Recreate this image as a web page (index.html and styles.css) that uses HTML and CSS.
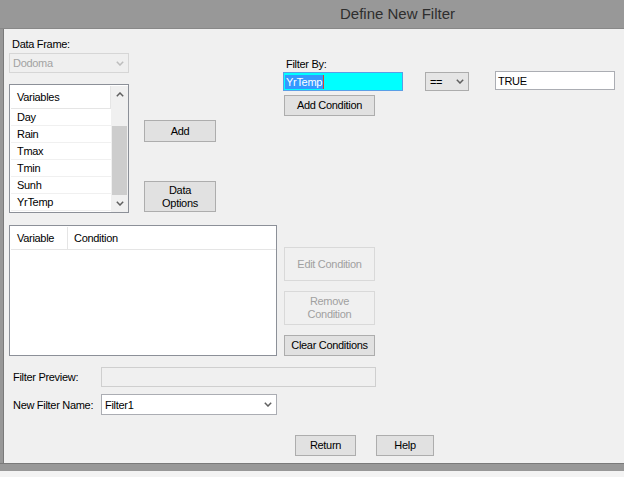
FILE: index.html
```html
<!DOCTYPE html>
<html>
<head>
<meta charset="utf-8">
<title>Define New Filter</title>
<link rel="stylesheet" href="styles.css">
</head>
<body>
<div class="titlebar">Define New Filter</div>
<div class="frame">
  <div class="lborder"></div>
  <div class="content">
    <div class="top">
      <div class="col-left">
        <div class="lbl">Data Frame:</div>
        <div class="combo combo-dis">
          <span>Dodoma</span>
          <svg class="chev" width="8" height="5" viewBox="0 0 8 5"><polyline points="0.8,0.8 4,4 7.2,0.8" fill="none" stroke="#bdbdbd" stroke-width="1.5"/></svg>
        </div>
        <div class="listbox">
          <div class="list">
            <div class="list-head">Variables</div>
            <div class="item">Day</div>
            <div class="item">Rain</div>
            <div class="item">Tmax</div>
            <div class="item">Tmin</div>
            <div class="item">Sunh</div>
            <div class="item">YrTemp</div>
          </div>
          <div class="scrollbar">
            <div class="sb-btn"><svg width="8" height="5" viewBox="0 0 8 5"><polyline points="0.8,4.2 4,1 7.2,4.2" fill="none" stroke="#606060" stroke-width="1.5"/></svg></div>
            <div class="sb-track"><div class="sb-thumb"></div></div>
            <div class="sb-btn"><svg width="8" height="5" viewBox="0 0 8 5"><polyline points="0.8,0.8 4,4 7.2,0.8" fill="none" stroke="#606060" stroke-width="1.5"/></svg></div>
          </div>
        </div>
      </div>
      <div class="col-mid">
        <button class="btn btn-add">Add</button>
        <button class="btn btn-dataopt">Data<br>Options</button>
      </div>
      <div class="col-right">
        <div class="lbl">Filter By:</div>
        <div class="filter-row">
          <div class="txt txt-focus"><span class="sel">YrTemp</span></div>
          <div class="combo combo-op">
            <span>==</span>
            <svg class="chev" width="8" height="5" viewBox="0 0 8 5"><polyline points="0.8,0.8 4,4 7.2,0.8" fill="none" stroke="#606060" stroke-width="1.5"/></svg>
          </div>
          <div class="txt txt-true">TRUE</div>
        </div>
        <button class="btn btn-addcond">Add Condition</button>
      </div>
    </div>
    <div class="mid">
      <div class="condlist">
        <div class="cond-head">
          <div class="ch-var">Variable</div>
          <div class="ch-cond">Condition</div>
        </div>
      </div>
      <div class="cond-btns">
        <button class="btn btn-dis btn-edit">Edit Condition</button>
        <button class="btn btn-dis btn-remove">Remove<br>Condition</button>
        <button class="btn btn-clear">Clear Conditions</button>
      </div>
    </div>
    <div class="form-row row-preview">
      <div class="form-lbl">Filter Preview:</div>
      <div class="preview-box"></div>
    </div>
    <div class="form-row row-name">
      <div class="form-lbl">New Filter Name:</div>
      <div class="combo combo-name">
        <span>Filter1</span>
        <svg class="chev" width="8" height="5" viewBox="0 0 8 5"><polyline points="0.8,0.8 4,4 7.2,0.8" fill="none" stroke="#606060" stroke-width="1.5"/></svg>
      </div>
    </div>
    <div class="action-row">
      <button class="btn btn-return">Return</button>
      <button class="btn btn-help">Help</button>
    </div>
  </div>
</div>
<div class="bborder"></div>
</body>
</html>
```
FILE: styles.css
```css
* { box-sizing: border-box; }

body {
  margin: 0;
  width: 624px;
  height: 477px;
  overflow: hidden;
  background: #f3f3f3;
  font-family: "Liberation Sans", Arial, sans-serif;
  font-size: 11px;
  letter-spacing: -0.3px;
  color: #000;
}

.titlebar {
  height: 29px;
  background: #989898;
  border-bottom: 1px solid #888888;
  padding-left: 340px;
  font-size: 15px;
  letter-spacing: 0;
  line-height: 28px;
  color: #2e2e2e;
  white-space: nowrap;
}

.frame {
  display: flex;
  height: 434px;
}

.lborder {
  width: 4px;
  background: #989898;
  border-right: 1px solid #7a7a7a;
}

.content {
  flex: 1;
  background: #f0f0f0;
  display: flex;
  flex-direction: column;
}

.bborder {
  height: 8px;
  background: #989898;
  border-top: 1px solid #7a7a7a;
}

/* top section */
.top {
  display: flex;
  align-items: flex-start;
  height: 196px;
  padding-left: 5px;
}

.lbl {
  height: 12px;
  line-height: 12px;
  padding-left: 3px;
  white-space: nowrap;
}

.col-left {
  width: 120px;
  margin-top: 9px;
  display: flex;
  flex-direction: column;
}

.combo {
  display: flex;
  align-items: center;
  justify-content: space-between;
  border: 1px solid #acacac;
  padding: 0 4px 0 3px;
  white-space: nowrap;
}

.combo-dis {
  margin-top: 3px;
  height: 20px;
  border-color: #d6d6d6;
  background: #efefef;
  color: #a2a2a2;
}

.listbox {
  margin-top: 11px;
  height: 129px;
  border: 1px solid #8c9098;
  background: #fff;
  display: flex;
  padding: 1px 0 0 1px;
}

.list {
  width: 100px;
  display: flex;
  flex-direction: column;
}

.list-head {
  height: 23px;
  line-height: 22px;
  padding-left: 6px;
  border-bottom: 1px solid #e5e5e5;
  border-right: 1px solid #e5e5e5;
}

.item {
  height: 17px;
  line-height: 16px;
  padding-left: 6px;
  border-bottom: 1px solid #f0f0f0;
}

.scrollbar {
  width: 17px;
  height: 126px;
  background: #f0f0f0;
  display: flex;
  flex-direction: column;
}

.sb-btn {
  height: 17px;
  display: flex;
  align-items: center;
  justify-content: center;
}

.sb-btn svg { display: block; }

.sb-track {
  flex: 1;
  padding-top: 23px;
}

.sb-thumb {
  height: 69px;
  margin: 0 1px;
  background: #cdcdcd;
}

.col-mid {
  width: 72px;
  margin-left: 15px;
  margin-top: 91px;
  display: flex;
  flex-direction: column;
}

.btn {
  font: inherit;
  letter-spacing: inherit;
  color: #000;
  background: #e1e1e1;
  border: 1px solid #adadad;
  padding: 0;
  margin: 0;
  line-height: 13px;
  text-align: center;
  display: block;
}

.btn-add { height: 22px; }
.btn-dataopt { height: 31px; margin-top: 39px; }

.col-right {
  margin-left: 67px;
  margin-top: 29px;
  display: flex;
  flex-direction: column;
}

.filter-row {
  display: flex;
  align-items: flex-start;
  margin-top: 2px;
}

.txt {
  height: 19px;
  border: 1px solid #abadb3;
  background: #fff;
  display: flex;
  align-items: center;
  padding-left: 2px;
  white-space: nowrap;
}

.txt-focus {
  width: 120px;
  border-color: #5a9ee6;
  background: #00ffff;
  padding-left: 1px;
}

.sel {
  background: #3399ff;
  color: #fff;
  height: 14px;
  line-height: 14px;
  padding: 0 1px;
  border-right: 1px solid #d8452e;
}

.combo-op {
  width: 44px;
  height: 19px;
  margin-left: 22px;
  background: #e5e5e5;
  padding-left: 4px;
}

.txt-true {
  width: 120px;
  margin-left: 26px;
  margin-top: -1px;
}

.btn-addcond {
  width: 91px;
  height: 21px;
  margin-top: 4px;
  margin-left: 1px;
}

/* middle section */
.mid {
  display: flex;
  align-items: flex-start;
  padding-left: 5px;
}

.condlist {
  width: 268px;
  height: 131px;
  border: 1px solid #8c9098;
  background: #fff;
  padding: 1px 1px 0 1px;
}

.cond-head {
  display: flex;
  height: 23px;
  border-bottom: 1px solid #e5e5e5;
  line-height: 22px;
  width: 265px;
}

.ch-var {
  width: 57px;
  padding-left: 6px;
  border-right: 1px solid #e5e5e5;
}

.ch-cond {
  padding-left: 6px;
}

.cond-btns {
  width: 91px;
  margin-left: 7px;
  display: flex;
  flex-direction: column;
}

.btn-dis {
  background: #f0f0f0;
  border-color: #d9d9d9;
  color: #a0a0a0;
}

.btn-edit { height: 34px; margin-top: 22px; }
.btn-remove { height: 34px; margin-top: 10px; }
.btn-clear { height: 21px; margin-top: 10px; }

/* form rows */
.form-row {
  display: flex;
  align-items: center;
  padding-left: 9px;
}

.form-lbl {
  width: 88px;
  line-height: 12px;
  white-space: nowrap;
}

.row-preview { margin-top: 11px; }
.row-name { margin-top: 7px; }

.preview-box {
  width: 275px;
  height: 20px;
  border: 1px solid #cfcfcf;
  background: #f0f0f0;
}

.combo-name {
  width: 176px;
  height: 21px;
  background: #fff;
  border-color: #abadb3;
  padding-left: 3px;
}

.action-row {
  display: flex;
  margin-top: 20px;
  padding-left: 291px;
}

.btn-return { width: 61px; height: 21px; }
.btn-help { width: 58px; height: 21px; margin-left: 20px; }
```
